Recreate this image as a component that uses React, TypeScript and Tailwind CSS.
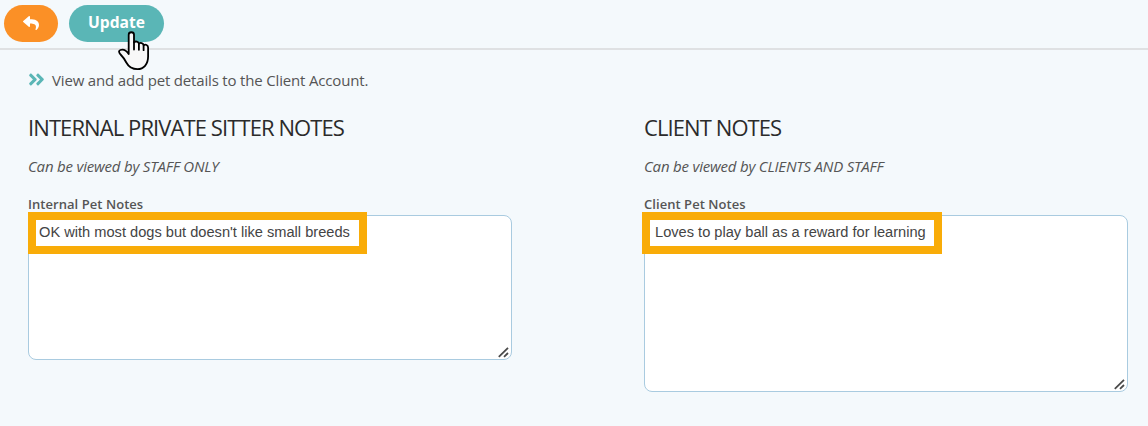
import React, { useState } from 'react';
import { FaReply, FaAngleDoubleRight } from 'react-icons/fa';

interface NotesSectionProps {
  title: string;
  hint: string;
  label: string;
  initialValue: string;
  heightClass: string;
  highlightClass: string;
}

const ResizeGrip = () => (
  <svg
    className="absolute right-[3px] bottom-[2px] pointer-events-none"
    width="11"
    height="11"
    viewBox="0 0 11 11"
    stroke="#4a4a4a"
    strokeWidth="1.8"
  >
    <path d="M0.8 9.8 L10 0.8 M6 9.8 L10 6" />
  </svg>
);

const HandCursor = () => (
  <svg
    className="absolute left-[49px] top-[26px] pointer-events-none"
    width="32"
    height="40"
    viewBox="0 0 32 40"
    fill="#f8f8f8"
    stroke="#000"
    strokeWidth="1.8"
    strokeLinecap="round"
    strokeLinejoin="round"
  >
    <path d="M10.7 23 V3.8 C10.7 .4 16 .4 16 3.8 V11.3 C17.5 9.8 20.5 10.6 20.9 12.6 C22.5 11.3 25.2 12 25.6 14.2 C27.5 13 30.1 14 30.1 16.5 V25.5 C30.1 33.5 25.5 38.2 19.5 38.2 C13.8 38.2 10.5 35.6 8.3 31.5 C7 29 5.3 26.3 3 24 C.8 21.8 .3 19.7 2.4 19 C5.6 18 8.5 19.7 10.7 23 Z" />
    <path d="M16 11 V18.5 M20.9 12.5 V18.8 M25.6 14.2 V19.2" fill="none" />
  </svg>
);

const NotesSection: React.FC<NotesSectionProps> = ({
  title,
  hint,
  label,
  initialValue,
  heightClass,
  highlightClass,
}) => {
  const [value, setValue] = useState(initialValue);

  return (
    <section className="w-[484px] shrink-0">
      <h2 className="text-[22px] leading-[30px] tracking-[-0.91px] text-[#2b2b2b] whitespace-nowrap">{title}</h2>
      <p className="mt-3 text-[15px] leading-6 tracking-[-0.2px] italic text-[#555] whitespace-nowrap">{hint}</p>
      <label className="block mt-4 text-[13px] leading-5 tracking-[0.05px] font-semibold text-[#555]">{label}</label>
      <div className="relative mt-px">
        <textarea
          value={value}
          onChange={(e) => setValue(e.target.value)}
          className={`block w-full ${heightClass} resize-none rounded-lg border border-[#a9cbe0] bg-white px-[10px] py-[6px] font-['Liberation_Sans',Arial,sans-serif] text-[14.63px] leading-[21px] text-[#444] outline-none`}
        />
        <ResizeGrip />
        <div className={`absolute -top-[3px] h-[42px] border-8 border-[#f9ac08] pointer-events-none ${highlightClass}`} />
      </div>
    </section>
  );
};

export default function App() {
  return (
    <div className="h-[426px] w-[1148px] overflow-hidden bg-[#f4f9fc] font-['Open_Sans',sans-serif]">
      {/* Toolbar */}
      <header className="flex h-[50px] items-start gap-[11px] border-b-2 border-[#dfe1e3] pt-[5px] pl-1">
        <button className="flex h-[37px] w-[54px] items-center justify-center rounded-full bg-[#fb9026] pb-0.5 text-white">
          <FaReply size={16} />
        </button>
        <div className="relative">
          <button className="flex h-[37px] w-[95px] items-center justify-center rounded-full bg-[#5ab6b6] pb-px text-[15.6px] font-bold text-white">
            Update
          </button>
          <HandCursor />
        </div>
      </header>

      <main className="pl-7 pt-[18px]">
        <div className="flex h-6 items-center text-[15px] tracking-[-0.17px] text-[#555]">
          <FaAngleDoubleRight size={19} className="-ml-px mr-[6px] -mt-0.5 text-[#5ab6b6]" />
          <span className="whitespace-nowrap">View and add pet details to the Client Account.</span>
        </div>

        <div className="mt-5 flex items-start gap-[132px]">
          <NotesSection
            title="INTERNAL PRIVATE SITTER NOTES"
            hint="Can be viewed by STAFF ONLY"
            label="Internal Pet Notes"
            initialValue="OK with most dogs but doesn't like small breeds"
            heightClass="h-[145px]"
            highlightClass="left-0 w-[339px]"
          />
          <NotesSection
            title="CLIENT NOTES"
            hint="Can be viewed by CLIENTS AND STAFF"
            label="Client Pet Notes"
            initialValue="Loves to play ball as a reward for learning"
            heightClass="h-[177px]"
            highlightClass="-left-[2px] w-[300px]"
          />
        </div>
      </main>
    </div>
  );
}
